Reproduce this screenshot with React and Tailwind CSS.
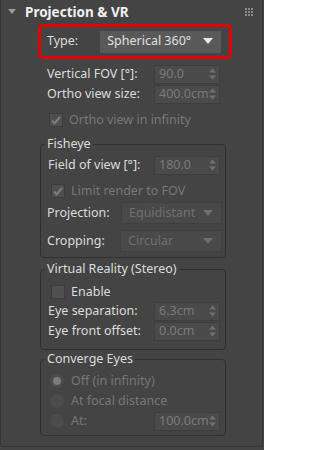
import React from 'react';

const font = { fontFamily: '"Noto Sans", "Open Sans", sans-serif' };

function Spin() {
  return (
    <svg width="7" height="14" viewBox="0 0 7 14" className="shrink-0">
      <path d="M3.5 1.5L7 5.5H0z M0 8.5h7L3.5 12.5z" fill="#707070" />
    </svg>
  );
}

function Arrow({ color }) {
  return (
    <svg width="10" height="7" viewBox="0 0 10 7" className="shrink-0">
      <path d="M0 0h10L5 6z" fill={color} />
    </svg>
  );
}

function NumField({ value, className = '' }) {
  return (
    <div className={`flex h-[19px] w-[66px] items-center overflow-hidden border border-[#3d3d3d] bg-[#4a4a4a] pl-[4px] pr-[3px] ${className}`}>
      <span className="min-w-0 flex-1 overflow-hidden whitespace-nowrap text-[#7a7a7a]">{value}</span>
      <Spin />
    </div>
  );
}

function Check({ checked, disabled, label }) {
  return (
    <div className="flex h-[16px] items-center pl-[10px]">
      <div className="flex h-[14px] w-[14px] items-center justify-center border border-[#3c3c3c] bg-[#4f4f4f]">
        {checked && (
          <svg width="10" height="9" viewBox="0 0 10 9">
            <path d="M1 4.5l2.5 3L9 1" stroke="#7c7c7c" strokeWidth="2" fill="none" />
          </svg>
        )}
      </div>
      <span className={`ml-[6px] ${disabled ? 'text-[#777]' : 'text-[#dcdcdc]'}`}>{label}</span>
    </div>
  );
}

function Radio({ on, label }) {
  return (
    <div className="flex h-[20px] items-center pl-[8px]">
      <div className="flex h-[16px] w-[16px] items-center justify-center rounded-full border border-[#434343] bg-[#4c4c4c]">
        {on && <div className="h-[8px] w-[8px] rounded-full bg-[#7b7b7b]" />}
      </div>
      <span className="ml-[6px] text-[#777]">{label}</span>
    </div>
  );
}

function Drop({ value, enabled, className = '' }) {
  return (
    <div className={`flex h-[22px] items-center justify-between pl-[7px] pr-[8px] ${enabled ? 'bg-[#595959] text-[#e0e0e0]' : 'border border-[#3f3f3f] bg-[#494949] text-[#6f6f6f]'} ${className}`}>
      <span className="whitespace-nowrap">{value}</span>
      <Arrow color={enabled ? '#e8e8e8' : '#6f6f6f'} />
    </div>
  );
}

function Group({ title, className = '', children }) {
  return (
    <fieldset className={`ml-[39px] w-[186px] rounded-[4px] border border-[#2f2f2f] px-[0px] ${className}`}>
      <legend className="ml-[4px] px-[2px] leading-[16px] text-[#dcdcdc]">{title}</legend>
      {children}
    </fieldset>
  );
}

function Row({ label, children, className = '' }) {
  return (
    <div className={`flex items-center justify-between ${className}`}>
      <span className="whitespace-nowrap text-[#dcdcdc]">{label}</span>
      {children}
    </div>
  );
}

export default function App() {
  return (
    <div className="h-[450px] w-[264px] bg-[#444444] text-[12.5px]" style={font}>
      <div className="h-[447px] w-[263px] rounded-b-[3px] border border-t-0 border-[#363636]">
        <div className="flex h-[24px] items-center pl-[7px] pr-[9px]">
          <svg width="8" height="6" viewBox="0 0 8 6">
            <path d="M0 0h8L4 5z" fill="#9c9c9c" />
          </svg>
          <span className="ml-[9px] text-[13.5px] font-bold text-[#f0f0f0]">Projection &amp; VR</span>
          <div className="ml-auto grid grid-cols-3 gap-[1px]">
            {Array.from({ length: 9 }).map((_, i) => (
              <div key={i} className="h-[2px] w-[2px] bg-[#8a8a8a]" />
            ))}
          </div>
        </div>

        <div className="ml-[37px] flex h-[35px] w-[194px] items-center rounded-[5px] border-[3px] border-[#e60000] pl-[6px]">
          <span className="text-[#dcdcdc]">Type:</span>
          <Drop value="Spherical 360°" enabled className="ml-[22px] w-[121px]" />
        </div>

        <div className="ml-[46px] mt-[5px] w-[173px]">
          <Row label="Vertical FOV [°]:" className="h-[20px]">
            <NumField value="90.0" />
          </Row>
          <Row label="Ortho view size:" className="h-[20px]">
            <NumField value="400.0cm" />
          </Row>
        </div>

        <div className="ml-[38px] mt-[8px]">
          <Check checked disabled label="Ortho view in infinity" />
        </div>

        <Group title="Fisheye" className="mt-[8px] h-[122px]">
          <div className="ml-[7px] mt-[3px] w-[172px]">
            <Row label="Field of view [°]:" className="h-[20px]">
              <NumField value="180.0" />
            </Row>
          </div>
          <div className="mt-[8px]">
            <Check checked disabled label="Limit render to FOV" />
          </div>
          <div className="ml-[6px] mt-[3px] w-[175px]">
            <Row label="Projection:" className="h-[22px]">
              <Drop value="Equidistant" className="w-[101px]" />
            </Row>
            <Row label="Cropping:" className="mt-[6px] h-[22px]">
              <Drop value="Circular" className="w-[102px]" />
            </Row>
          </div>
        </Group>

        <Group title="Virtual Reality (Stereo)" className="mt-[3px] h-[89px]">
          <div className="mt-[7px]">
            <Check label="Enable" />
          </div>
          <div className="ml-[7px] mt-[1px] w-[172px]">
            <Row label="Eye separation:" className="h-[20px]">
              <NumField value="6.3cm" />
            </Row>
            <Row label="Eye front offset:" className="h-[20px]">
              <NumField value="0.0cm" />
            </Row>
          </div>
        </Group>

        <Group title="Converge Eyes" className="mt-[1px] h-[85px]">
          <div className="mt-[4px]">
            <Radio on label="Off (in infinity)" />
            <Radio label="At focal distance" />
            <div className="flex items-center pr-[5px]">
              <div className="flex-1">
                <Radio label="At:" />
              </div>
              <NumField value="100.0cm" />
            </div>
          </div>
        </Group>
      </div>
    </div>
  );
}
